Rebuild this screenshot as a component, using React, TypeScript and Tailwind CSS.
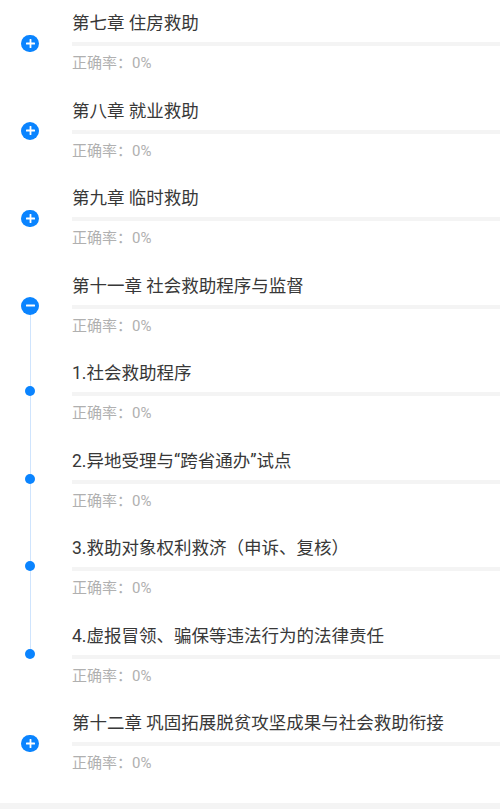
import React from 'react';

type Item = {
  title: string;
  kind: 'plus' | 'minus' | 'dot';
  line?: 'down' | 'full' | 'up';
};

const items: Item[] = [
  { title: '第七章 住房救助', kind: 'plus' },
  { title: '第八章 就业救助', kind: 'plus' },
  { title: '第九章 临时救助', kind: 'plus' },
  { title: '第十一章 社会救助程序与监督', kind: 'minus', line: 'down' },
  { title: '1.社会救助程序', kind: 'dot', line: 'full' },
  { title: '2.异地受理与“跨省通办”试点', kind: 'dot', line: 'full' },
  { title: '3.救助对象权利救济（申诉、复核）', kind: 'dot', line: 'full' },
  { title: '4.虚报冒领、骗保等违法行为的法律责任', kind: 'dot', line: 'up' },
  { title: '第十二章 巩固拓展脱贫攻坚成果与社会救助衔接', kind: 'plus' },
];

const Marker = ({ kind }: { kind: Item['kind'] }) => {
  if (kind === 'dot') {
    return <div className="relative z-10 mt-[36px] w-[10px] h-[10px] rounded-full bg-[#0a84ff]" />;
  }
  return (
    <div className="relative z-10 mt-[34.5px] w-[17.5px] h-[17.5px] rounded-full bg-[#0a84ff] flex items-center justify-center">
      <svg width="11" height="11" viewBox="0 0 11 11">
        <rect x="1" y="4.6" width="9" height="1.8" rx="0.5" fill="#fff" />
        {kind === 'plus' && <rect x="4.6" y="1" width="1.8" height="9" rx="0.5" fill="#fff" />}
      </svg>
    </div>
  );
};

const Row = ({ item }: { item: Item }) => (
  <div className="flex h-[87.5px]">
    <div className="relative w-[60px] flex justify-center shrink-0">
      {item.line === 'down' && <div className="absolute left-[29.5px] top-[43px] bottom-0 w-px bg-[#cfe4fd]" />}
      {item.line === 'full' && <div className="absolute left-[29.5px] top-0 bottom-0 w-px bg-[#cfe4fd]" />}
      {item.line === 'up' && <div className="absolute left-[29.5px] top-0 h-[40px] w-px bg-[#cfe4fd]" />}
      <Marker kind={item.kind} />
    </div>
    <div className="flex-1 ml-[12px] pt-[11px]">
      <div className="text-[17.5px] leading-[24px] text-[#383838] whitespace-nowrap">{item.title}</div>
      <div className="mt-[7px] h-[4px] bg-[#f4f4f4]" />
      <div className="mt-[7px] text-[15px] leading-[20px] text-[#b0b0b0]">正确率：0%</div>
    </div>
  </div>
);

export default function App() {
  return (
    <div
      className="w-[500px] h-[809px] bg-white overflow-hidden flex flex-col"
      style={{ fontFamily: 'Roboto, "Noto Sans CJK SC", sans-serif' }}
    >
      <div className="flex-1">
        {items.map((it, i) => (
          <Row key={i} item={it} />
        ))}
      </div>
      <div className="h-[6px] bg-[#f4f4f4]" />
    </div>
  );
}
